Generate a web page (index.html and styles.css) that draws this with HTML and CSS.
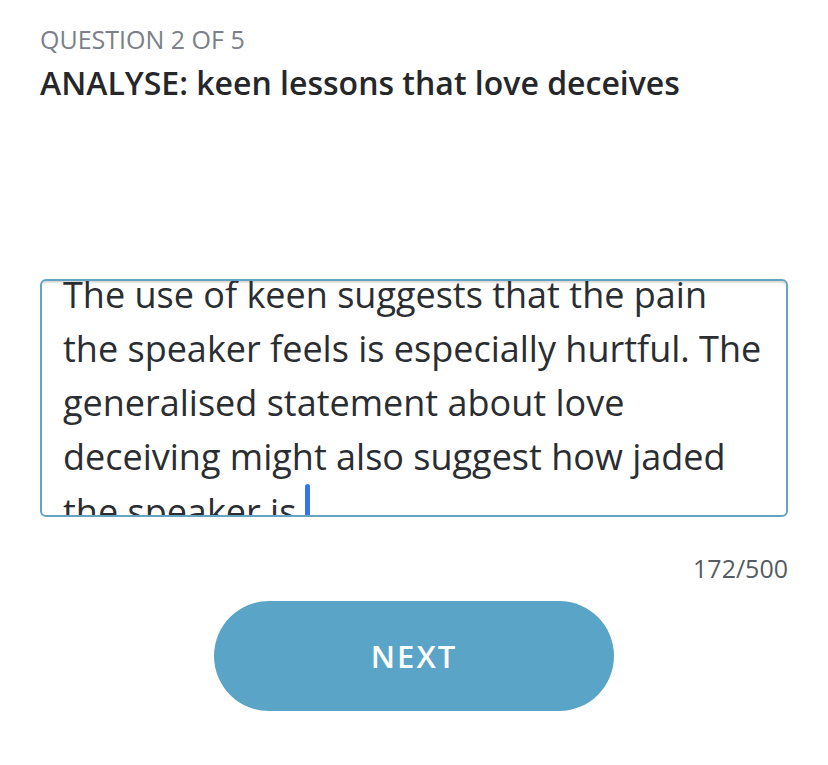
FILE: index.html
```html
<!DOCTYPE html>
<html>
<head>
<meta charset="utf-8">
<link rel="stylesheet" href="styles.css">
</head>
<body>
<main class="page">
  <div class="qnum">QUESTION 2 OF 5</div>
  <h1 class="qtitle">ANALYSE: keen lessons that love deceives</h1>
  <div class="answer">
    <div class="answer-text">The use of keen suggests that the pain the speaker feels is especially hurtful. The generalised statement about love deceiving might also suggest how jaded the speaker is<span class="caret"></span></div>
  </div>
  <div class="counter">172/500</div>
  <div class="actions">
    <button class="next">NEXT</button>
  </div>
</main>
</body>
</html>
```
FILE: styles.css
```css
html, body {
  margin: 0;
  padding: 0;
  background: #ffffff;
}
.page {
  font-family: "Open Sans", "Noto Sans", sans-serif;
  padding: 22px 40px 0 40px;
}
.qnum {
  font-size: 25px;
  line-height: 34px;
  color: #7b808a;
  font-weight: 400;
}
.qtitle {
  margin: 6px 0 0 0;
  font-size: 32px;
  line-height: 42px;
  font-weight: 600;
  color: #25272b;
}
.answer {
  margin-top: 175px;
  height: 234px;
  border: 2px solid #64a3c2;
  border-radius: 6px;
  overflow: hidden;
  box-shadow: inset 0 4px 3px -3px rgba(0,0,0,0.25);
}
.answer-text {
  margin-top: -13px;
  padding: 0 18px 0 21px;
  font-size: 36px;
  line-height: 54px;
  color: #2a2d32;
}
.caret {
  display: inline-block;
  width: 5px;
  height: 50px;
  margin-left: 9px;
  background: #3474f0;
  border-radius: 2.5px;
  vertical-align: -9px;
}
.counter {
  margin-top: 36px;
  text-align: right;
  font-size: 25px;
  line-height: 30px;
  color: #565b64;
}
.actions {
  display: flex;
  justify-content: center;
  margin-top: 18px;
}
.next {
  width: 400px;
  height: 110px;
  border: none;
  border-radius: 55px;
  background: #5aa4c8;
  color: #ffffff;
  font-family: "Open Sans", "Noto Sans", sans-serif;
  font-size: 31px;
  font-weight: 600;
  letter-spacing: 2px;
}
```
